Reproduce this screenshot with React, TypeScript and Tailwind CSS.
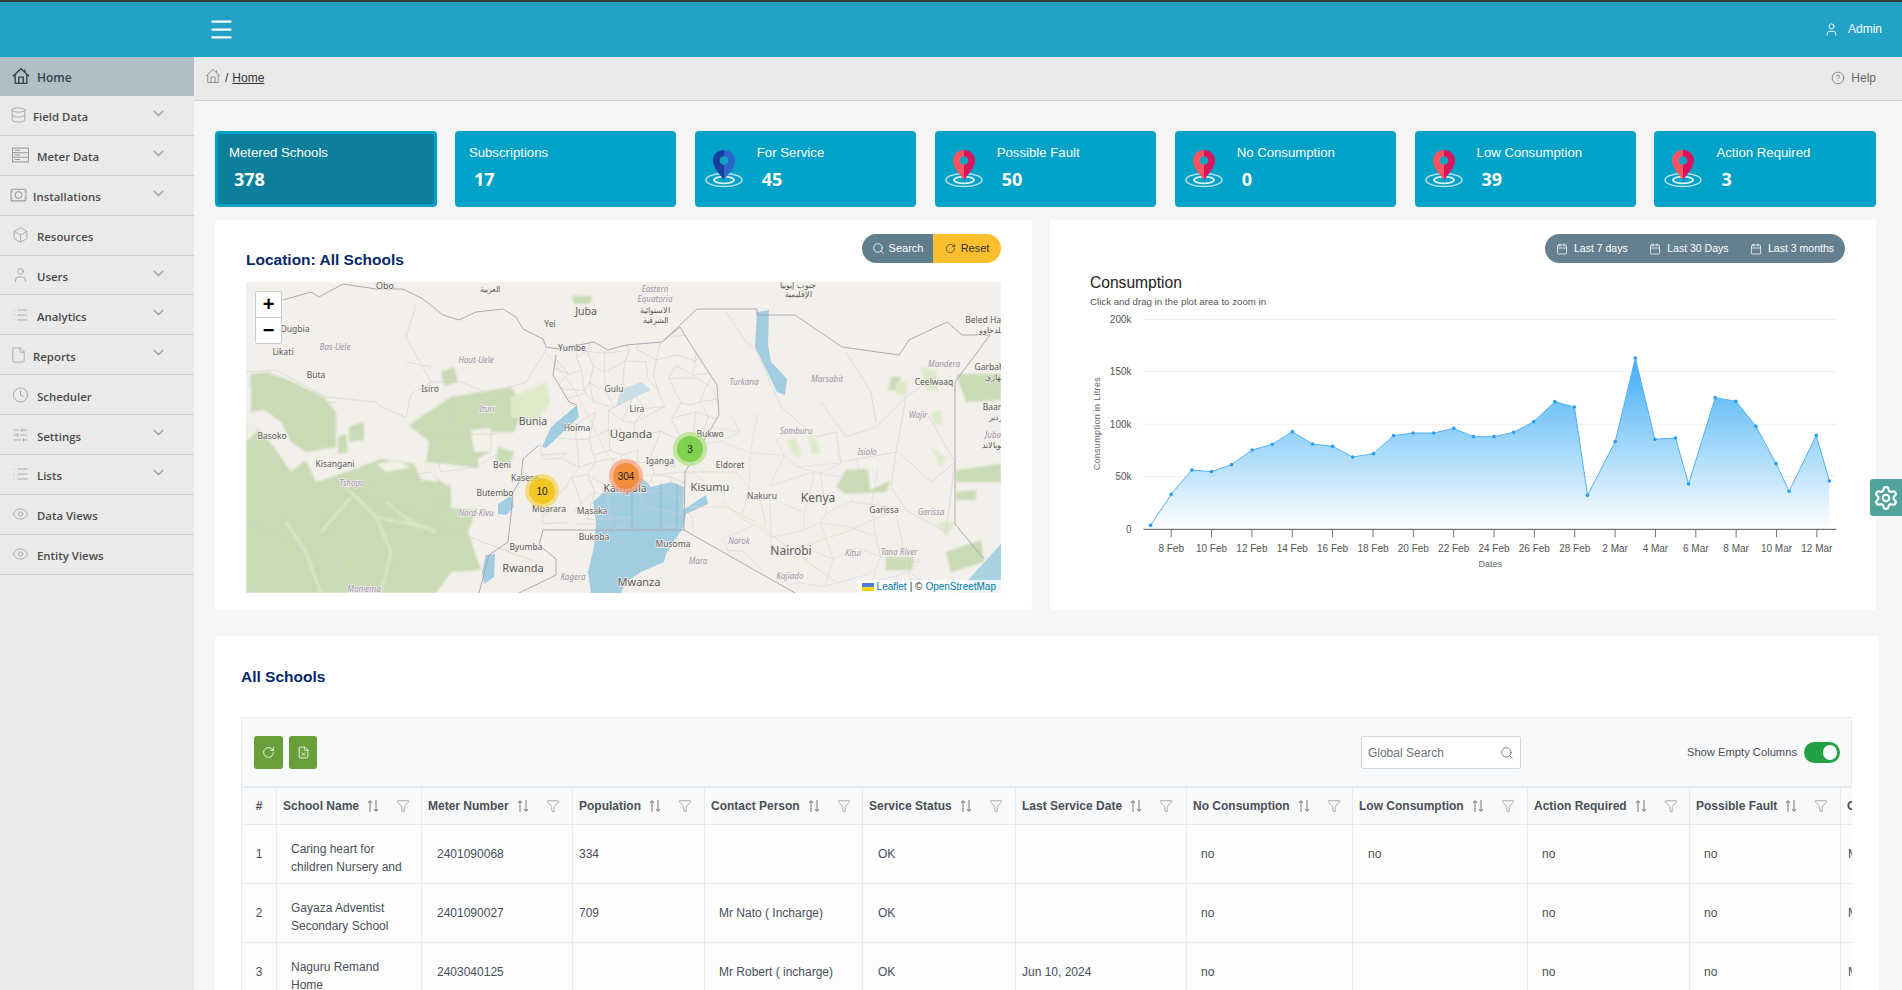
import React from 'react';
import {
  Box,
  Calendar,
  ChevronDown,
  CircleHelp,
  Clock,
  Database,
  Eye,
  File,
  FileX,
  Funnel,
  List,
  Menu,
  RotateCw,
  Search,
  Settings,
  SlidersHorizontal,
  User,
} from 'lucide-react';

const arial = { fontFamily: '"Liberation Sans", Arial, sans-serif' };

type IconProps = { size?: number; color?: string; strokeWidth?: number; className?: string };

const HomeIcon = ({ size = 16, color = '#9e9e9e', strokeWidth = 1, className }: IconProps) => (
  <svg width={size} height={size} viewBox="0 0 16 16" fill="none" stroke={color} strokeWidth={strokeWidth} className={className}>
    <path d="M0.800 8.200 8 1.500l7.200 6.700M2.800 6.500v8h10.400v-8M6 14.500V9h4v5.500M11.500 2.200v2.800" />
  </svg>
);

const CameraBox = ({ size = 16, color = '#9e9e9e' }: IconProps) => (
  <svg width={size} height={size} viewBox="0 0 16 16" fill="none" stroke={color} strokeWidth="1">
    <rect x="1" y="2.5" width="14" height="11" rx="1" />
    <circle cx="8" cy="8" r="3" />
    <path d="M1 5h1.500M13.500 5H15M1 11h1.500M13.500 11H15" />
  </svg>
);

const RowsBox = ({ size = 16, color = '#9e9e9e' }: IconProps) => (
  <svg width={size} height={size} viewBox="0 0 16 16" fill="none" stroke={color} strokeWidth="1">
    <rect x="0.5" y="1.500" width="15" height="13" />
    <path d="M0.500 5.800h15M0.500 10.200h15M2.500 3.600h5M2.500 8h5M2.500 12.300h5" />
  </svg>
);

const menu = [
  { label: 'Home', icon: HomeIcon, left: 37, active: true },
  { label: 'Field Data', icon: Database, left: 33, sub: true },
  { label: 'Meter Data', icon: RowsBox, left: 37, sub: true },
  { label: 'Installations', icon: CameraBox, left: 33, sub: true },
  { label: 'Resources', icon: Box, left: 37 },
  { label: 'Users', icon: User, left: 37, sub: true },
  { label: 'Analytics', icon: List, left: 37, sub: true },
  { label: 'Reports', icon: File, left: 33, sub: true },
  { label: 'Scheduler', icon: Clock, left: 37 },
  { label: 'Settings', icon: SlidersHorizontal, left: 37, sub: true },
  { label: 'Lists', icon: List, left: 37, sub: true },
  { label: 'Data Views', icon: Eye, left: 37 },
  { label: 'Entity Views', icon: Eye, left: 37 },
];

const Sidebar = () => (
  <aside className="w-[194px] shrink-0 bg-[#eaeaea]" style={{ fontFamily: '"Open Sans", sans-serif' }}>
    {menu.map((m) => {
      const Icon = m.icon as React.ElementType;
      return (
        <div
          key={m.label}
          className={`relative flex items-center border-b font-semibold ${
            m.active
              ? 'h-[39px] text-[12px] bg-[#b0bec5] text-[#2f4450] border-[#b0bec5]'
              : 'h-[39.9px] text-[11.4px] text-[#4a4a4a] border-[#d0d0d0]'
          }`}
        >
          <span className={`absolute top-1/2 -translate-y-1/2 ${m.left === 33 ? 'left-[10px]' : 'left-[12px]'}`}>
            <Icon size={m.active ? 18 : 17} strokeWidth={m.active ? 1.2 : 1.1} color={m.active ? '#2f4450' : '#9a9a9a'} />
          </span>
          <span className={m.left === 33 ? 'ml-[33px] mt-[3px]' : 'ml-[37px] mt-[3px]'}>{m.label}</span>
          {m.sub && <ChevronDown size={17} strokeWidth={2} color="#a8a8a8" className="absolute left-[150px] top-[9px]" />}
        </div>
      );
    })}
  </aside>
);

const Pin = ({ blue }: { blue?: boolean }) => (
  <svg width="40" height="40" viewBox="0 0 40 40" className="shrink-0">
    <ellipse cx="19" cy="30" rx="18" ry="6.500" fill="none" stroke="#bfe6f2" strokeWidth="1.300" />
    <ellipse cx="19" cy="30" rx="10" ry="3.300" fill="none" stroke="#d8f1f8" strokeWidth="1.800" />
    <path d="M19 0C12.500 0 8 4.800 8 10.500 8 18 15 24 19 30Z" fill={blue ? '#173f9f' : '#ff5560'} />
    <path d="M19 0C25.500 0 30 4.800 30 10.500 30 18 23 24 19 30Z" fill={blue ? '#2e64cc' : '#d9145f'} />
    <circle cx="19" cy="10.500" r="4.300" fill="#16a3c4" />
  </svg>
);

const stats = [
  { title: 'Metered Schools', value: '378', active: true },
  { title: 'Subscriptions', value: '17' },
  { title: 'For Service', value: '45', pin: 'blue' },
  { title: 'Possible Fault', value: '50', pin: 'red' },
  { title: 'No Consumption', value: '0', pin: 'red' },
  { title: 'Low Consumption', value: '39', pin: 'red' },
  { title: 'Action Required', value: '3', pin: 'red' },
];

const StatCards = () => (
  <div className="grid grid-cols-7 gap-x-[18.4px] w-[1661px]">
    {stats.map((s) => (
      <div
        key={s.title}
        className={`h-[76px] rounded-[4px] flex text-white ${
          s.active ? 'bg-[#0b7f9b] border-[3px] border-[#00a2c8] pl-[11px] pt-[10.5px]' : 'bg-[#00a2c8] pt-[13.5px] pl-[14px]'
        }`}
      >
        {s.pin && (
          <div className="w-[48px] mt-[5.500px] -ml-[4px] mr-[4px]">
            <Pin blue={s.pin === 'blue'} />
          </div>
        )}
        <div>
          <div className="text-[13.2px] leading-[15px]" style={arial}>
            {s.title}
          </div>
          <div
            className="ml-[5px] mt-[7.5px] text-[18px] leading-[24px] font-bold"
            style={{ fontFamily: '"Open Sans", sans-serif' }}
          >
            {s.value}
          </div>
        </div>
      </div>
    ))}
  </div>
);

// district boundaries are too many to trace by hand, so they are a jittered mesh
const mesh = (x0: number, y0: number, x1: number, y1: number, step: number, seed: number) => {
  const r = (n: number) => {
    const v = Math.sin(n * 12.9898 + seed) * 43758.5453;
    return v - Math.floor(v);
  };
  const nx = Math.floor((x1 - x0) / step);
  const ny = Math.floor((y1 - y0) / step);
  const p = (i: number, j: number) => {
    const k = i * 31 + j * 57;
    return `${(x0 + i * step + (r(k) - 0.5) * step).toFixed(1)},${(y0 + j * step + (r(k + 3) - 0.5) * step).toFixed(1)}`;
  };
  let d = '';
  for (let i = 0; i <= nx; i++) {
    for (let j = 0; j <= ny; j++) {
      if (i < nx && r(i * 7 + j * 13) > 0.3) d += `M${p(i, j)}L${p(i + 1, j)}`;
      if (j < ny && r(i * 11 + j * 17) > 0.3) d += `M${p(i, j)}L${p(i, j + 1)}`;
    }
  }
  return d;
};

const uganda = '310,73 348,60 362,68 380,63 416,60 434,45 443,60 471,103 473,133 459,157 439,190 438,248 297,248 265,233 267,210 275,197 277,177 293,163 323,120 307,93';
const kenyaSouth = '439,190 459,157 473,133 520,130 590,170 640,190 660,250 690,311 555,311 438,248';

type Label = [string, number, number, number?, boolean?];
const labels: Label[] = [
  ['Obo', 139, 7, 9], ['Juba', 340, 33, 10.5], ['Yei', 304, 45, 8.5], ['Dugbia', 49, 50, 8.5], ['Likati', 37, 73, 8.5],
  ['Bas-Uele', 89, 68, 8, true], ['Haut-Uele', 230, 81, 8, true], ['Yumbe', 326, 69, 8.5], ['Buta', 70, 96, 8.5],
  ['Isiro', 184, 110, 8.5], ['Gulu', 368, 110, 8.5], ['Ituri', 241, 130, 8, true], ['Bunia', 287, 143, 10.5],
  ['Hoima', 331, 149, 8.5], ['Basoko', 26, 157, 8.5], ['Kisangani', 89, 185, 8.5], ['Beni', 256, 186, 8.5],
  ['Kasese', 279, 199, 8.5], ['Tshopo', 106, 204, 8, true], ['Butembo', 249, 214, 8.5], ['Nord-Kivu', 230, 234, 8, true],
  ['Mbarara', 303, 230, 8.5], ['Masaka', 346, 232, 8.5], ['Bukoba', 348, 258, 8.5], ['Byumba', 280, 268, 8.5],
  ['Rwanda', 277, 290, 11], ['Kagera', 327, 298, 8, true], ['Maniema', 118, 310, 8, true],
  ['Eastern', 409, 10, 8, true], ['Equatoria', 409, 20, 8, true], ['الاستوائية', 409, 31, 8], ['الشرقية', 409, 41, 8],
  ['جنوب إيوبيا', 552, 6, 8], ['الإقليمية', 552, 15, 8], ['العربية', 244, 10, 8],
  ['Lira', 391, 130, 8.5], ['Uganda', 385, 156, 11.5], ['Bukwo', 464, 155, 8.5], ['Iganga', 414, 182, 8.5],
  ['Eldoret', 484, 186, 8.5], ['Kisumu', 464, 209, 11], ['Kampala', 379, 210, 10.5], ['Nakuru', 516, 217, 8.5],
  ['Kenya', 572, 220, 12], ['Turkana', 498, 103, 8, true], ['Marsabit', 581, 100, 8, true], ['Somburu', 550, 152, 8, true],
  ['Isiolo', 621, 173, 8, true], ['Mandera', 698, 85, 8, true], ['Ceelwaaq', 688, 103, 8.5], ['Garbaharey', 752, 88, 8.5],
  ['Beled Hawo', 743, 41, 8.5], ['بلدحاوو', 745, 51, 8], ['غربهاري', 752, 98, 8], ['Baardheere', 760, 128, 8.5], ['باردير', 752, 138, 8],
  ['Wajir', 672, 136, 8, true], ['Jubaland', 755, 156, 8, true], ['جوبالاند', 748, 166, 8],
  ['Garissa', 638, 231, 8.5], ['Garissa', 685, 233, 8, true], ['Narok', 493, 262, 8, true], ['Mara', 452, 282, 8, true],
  ['Musoma', 427, 265, 8.5], ['Nairobi', 545, 273, 12], ['Kitui', 607, 274, 8, true], ['Tana River', 653, 273, 8, true],
  ['Kajiado', 544, 297, 8, true], ['Mwanza', 393, 304, 11],
];

const MapArt = () => (
  <svg viewBox="0 0 755 311" className="block w-full h-full" style={{ fontFamily: '"Noto Sans", sans-serif' }}>
    <defs>
      <clipPath id="ug">
        <polygon points={uganda} />
      </clipPath>
      <clipPath id="ke">
        <polygon points={kenyaSouth} />
      </clipPath>
    </defs>
    <rect width="755" height="311" fill="#f3efea" />
    <g fill="#c8dbb5" className="blur-[1px]">
      <polygon points="5,100 25,92 40,97 78,115 90,130 90,165 60,170 45,160 35,140 18,128 5,130" />
      <polygon points="0,140 15,150 30,168 45,190 60,178 70,200 100,190 135,177 170,182 205,206 205,226 230,228 222,250 235,288 205,290 190,311 0,311" />
      <polygon points="163,143 205,115 265,105 278,125 268,150 245,150 245,170 232,176 232,186 200,182 180,180 183,160" />
      <polygon points="103,145 118,140 118,158 103,160" />
      <polygon points="92,155 100,152 102,170 92,172" />
      <polygon points="5,92 25,90 12,108 4,104" />
      <polygon points="252,165 268,170 262,186 250,178" />
      <polygon points="195,90 208,85 212,100 198,104" />
      <polygon points="326,14 346,14 344,22 328,22" />
      <polygon points="600,188 622,187 624,208 645,198 640,210 600,212 590,205" />
      <polygon points="710,92 755,92 755,118 720,120" />
      <polygon points="710,188 755,182 755,200 710,200" />
      <polygon points="710,210 730,208 730,218 710,218" />
      <polygon points="640,275 668,275 666,288 640,288" />
      <polygon points="645,95 655,95 652,108 642,108" />
      <polygon points="700,270 735,258 738,280 705,290" />
    </g>
    <g fill="#dfeacb" className="blur-[1px]">
      <polygon points="265,115 300,100 305,120 290,140 265,135" />
      <polygon points="540,158 550,156 556,175 548,174" />
      <polygon points="562,155 570,155 574,172 566,172" />
      <polygon points="685,130 695,128 697,142 687,142" />
      <polygon points="685,165 700,175 695,185" />
      <polygon points="650,100 662,100 660,115 650,112" />
      <polygon points="675,85 690,88 692,110 680,108" />
      <polygon points="690,240 710,240 700,255" />
    </g>
    <g fill="#f3efe6" className="blur-[1px]">
      <polygon points="225,148 245,146 245,170 228,170" />
      <polygon points="168,182 180,180 193,200 175,198" />
      <polygon points="130,182 150,178 165,185 140,190" />
      <polygon points="0,135 12,148 0,160" />
    </g>
    <g stroke="#dbe7c9" strokeWidth="2.600" fill="none" className="blur-[1px]">
      <path d="M100,205 L130,235 L145,270 L135,311 M130,235 L175,245 M140,220 L165,240 L190,250 M40,240 L60,270 L75,311 M105,215 L75,250" />
    </g>
    <g stroke="#d9c8b4" strokeWidth="0.800" fill="none" opacity="0.7">
      <path d="M180,153 L250,152 M100,205 L170,235 L290,280" />
    </g>
    <g fill="#a1cde1">
      <path d="M347,220 L358,210 L380,204 L395,195 L405,205 L425,200 L438,205 L437,228 L460,213 L462,222 L440,232 L437,246 L426,262 L420,272 L418,280 L395,290 L380,300 L375,311 L345,311 L342,290 L348,265 L350,240 Z" />
      <polygon points="331,123 333,135 300,166 296,165 305,145" />
      <polygon points="252,222 266,213 268,225 260,233 252,232" />
      <polygon points="240,273 249,272 248,295 238,302 236,290" />
      <polygon points="511,30 523,28 522,62 525,80 541,97 539,113 531,110 519,85 509,65" />
      <polygon points="723,297 755,262 755,311 712,311" fill="#aad3df" />
      <polygon points="375,108 395,100 405,108 390,115 370,125" opacity="0.5" />
    </g>
    <path d={mesh(300, 55, 480, 250, 16, 3)} clipPath="url(#ug)" stroke="#d3ced6" strokeWidth="0.600" fill="none" />
    <path d={mesh(430, 120, 690, 311, 26, 9)} clipPath="url(#ke)" stroke="#dcd7dc" strokeWidth="0.600" fill="none" />
    <g stroke="#d3ced5" strokeWidth="0.600" fill="none">
      <path d="M0,90 L30,88 L80,115 L130,120 L135,125 L160,135 L165,112 L185,100 L215,100 L245,112 L280,100 L300,68" />
      <path d="M170,23 L160,55 L185,100 M160,80 L185,85 M125,210 L155,225 L190,240 L195,218 L205,200" />
      <path d="M180,145 L205,140 L205,115 M185,155 L195,190 L230,185 L255,170 M120,200 L185,190" />
      <path d="M100,310 L90,280 L50,260 L0,240 M30,130 L90,120" />
      <path d="M511,70 L535,125 L570,155 L590,150 L595,180 L650,170 L660,115 L630,145 L600,155 L575,120 M660,115 L690,95 M650,170 L645,205 L660,228 L700,250 L709,180 L685,200 L650,168" />
      <path d="M480,30 L500,60 L511,70 M600,70 L625,110 L630,140 M680,130 L709,180" />
    </g>
    <g stroke="#ead5c4" strokeWidth="0.700" fill="none">
      <path d="M440,225 L480,225 L510,240 L545,268 L590,300 M490,190 L515,220 L520,245 M545,268 L600,250 L640,232 M650,232 L665,300" />
      <path d="M300,70 L330,110 L360,170 L380,195 L440,190 L490,190" />
    </g>
    <g stroke="#8db3ca" strokeWidth="0.700" fill="none">
      <path d="M386,204 V248 M415,201 V248 M431,201 V248" />
    </g>
    <g stroke="#b0a8b4" strokeWidth="1" fill="none" strokeLinejoin="round">
      <polyline points="37,18 65,10 73,15 97,2 130,7 157,7 177,17 197,33 213,38 230,30 257,27 270,35 277,47 297,57 300,65 313,67 348,60 362,68 380,63 416,60 451,27 511,27 511,33 549,33 596,65 653,73 663,58 701,40 716,53 744,53 709,100 709,242 738,277" />
      <polyline points="310,73 307,93 323,120 331,123" />
      <polyline points="293,163 277,177 275,197 267,210 265,233 262,260 243,273 233,311" />
      <polyline points="416,60 434,45 443,60 471,103 473,133 459,157 439,190 438,248 549,311" />
      <polyline points="297,248 438,248" />
      <polyline points="297,248 293,263 310,277 310,293 273,311" />
    </g>
    <g className="[paint-order:stroke]" stroke="#f3efea" strokeWidth="1.400" textAnchor="middle">
      {labels.map(([t, x, y, s, it], i) => (
        <text
          key={i}
          x={x}
          y={y}
          fontSize={s}
          fontStyle={it ? 'italic' : 'normal'}
          fill={it ? '#a095a8' : '#5c5c5c'}
        >
          {t}
        </text>
      ))}
    </g>
    {[
      { x: 296, y: 209, o: 'rgba(241,211,87,0.7)', i: 'rgba(240,194,12,0.8)', t: '10' },
      { x: 380, y: 194, o: 'rgba(253,156,115,0.7)', i: 'rgba(241,128,23,0.7)', t: '304' },
      { x: 444, y: 167, o: 'rgba(181,226,140,0.8)', i: 'rgba(110,204,57,0.8)', t: '3' },
    ].map((c) => (
      <g key={c.t}>
        <circle cx={c.x} cy={c.y} r="17" fill={c.o} />
        <circle cx={c.x} cy={c.y} r="13" fill={c.i} />
        <text x={c.x} y={c.y + 3.500} fontSize="10" fontFamily='"Liberation Sans", sans-serif' textAnchor="middle" fill="#222">
          {c.t}
        </text>
      </g>
    ))}
  </svg>
);

const LocationCard = () => (
  <div className="bg-white rounded-[4px] h-[390px] px-[31px] pt-[14px]">
    <div className="flex justify-between items-end">
      <h2 className="text-[15.5px] leading-[20px] font-bold text-[#06296b] -mb-[7px]" style={arial}>
        Location: All Schools
      </h2>
      <div className="flex h-[29px] rounded-full overflow-hidden text-[11px]" style={arial}>
        <div className="w-[71px] bg-[#607d8b] text-white flex items-center justify-center gap-[4px]">
          <Search size={13} strokeWidth={1.5} /> Search
        </div>
        <div className="w-[68px] bg-[#fbbf2d] text-[#333] flex items-center justify-center gap-[5px]">
          <RotateCw size={11} strokeWidth={1.5} /> Reset
        </div>
      </div>
    </div>
    <div className="relative mt-[19px] h-[311px] overflow-hidden">
      <MapArt />
      <div className="absolute left-[9px] top-[9px] w-[27px] h-[53px] bg-white rounded-[2px] border border-[#ccc] flex flex-col items-center text-black font-bold" style={arial}>
        <div className="h-[26px] w-full flex items-center justify-center border-b border-[#ccc] text-[20px] leading-none">+</div>
        <div className="h-[26px] w-full flex items-center justify-center text-[20px] leading-none">−</div>
      </div>
      <div className="absolute right-0 bottom-0 h-[13px] pl-[5px] pr-[5px] bg-white/80 flex items-center text-[10px] leading-none text-[#333]" style={arial}>
        <svg width="12" height="8" viewBox="0 0 12 8" className="mr-[3px]">
          <rect width="12" height="4" fill="#4c7be1" />
          <rect y="4" width="12" height="4" fill="#ffd500" />
        </svg>
        <span className="text-[#0078a8]">Leaflet</span>
        <span className="mx-[3px]">| ©</span>
        <span className="text-[#0078a8]">OpenStreetMap</span>
      </div>
    </div>
  </div>
);

// points are read from the plot: x / 1.84, y / 3 - 10 gives svg pixels
const raw = [
  [185, 673], [223, 580], [261, 507], [297, 512], [334, 491], [372, 447], [409, 430], [446, 392], [483, 429], [520, 436],
  [557, 468], [595, 458], [632, 404], [668, 396], [706, 396], [743, 382], [779, 407], [817, 407], [853, 394], [890, 362],
  [929, 302], [965, 318], [989, 583], [1040, 422], [1077, 171], [1113, 415], [1151, 411], [1175, 549], [1224, 290],
  [1262, 301], [1299, 376], [1336, 488], [1360, 571], [1410, 403], [1434, 540],
];
const X = (p: number) => p / 1.84;
const Y = (p: number) => p / 3 - 10;
const ticks = ['8 Feb', '10 Feb', '12 Feb', '14 Feb', '16 Feb', '18 Feb', '20 Feb', '22 Feb', '24 Feb', '26 Feb', '28 Feb', '2 Mar', '4 Mar', '6 Mar', '8 Mar', '10 Mar', '12 Mar'];

const ChartArt = () => {
  const pts = raw.map(([x, y]) => `${X(x).toFixed(1)},${Y(y).toFixed(1)}`).join(' ');
  const base = Y(685);
  return (
    <svg width="826" height="270" className="block" style={arial}>
      <defs>
        <linearGradient id="area" x1="0" y1={Y(171)} x2="0" y2={base} gradientUnits="userSpaceOnUse">
          <stop offset="0" stopColor="#3fadf6" />
          <stop offset="1" stopColor="#ffffff" />
        </linearGradient>
      </defs>
      {[[55, '200k'], [211, '150k'], [370, '100k'], [527, '50k'], [685, '0']].map(([y, t]) => (
        <g key={t as string}>
          {y !== 685 && <line x1={X(172)} x2={X(1447)} y1={Y(y as number)} y2={Y(y as number)} stroke="#eeeeee" strokeWidth="1" />}
          <text x={X(150)} y={Y(y as number) + 3.500} fontSize="10" fill="#555" textAnchor="end">
            {t}
          </text>
        </g>
      ))}
      <polygon points={`${X(185)},${base} ${pts} ${X(1434)},${base}`} fill="url(#area)" />
      <polyline points={pts} fill="none" stroke="#52b3f2" strokeWidth="1" />
      {raw.map(([x, y]) => (
        <circle key={x} cx={X(x)} cy={Y(y)} r="1.800" fill="#2a9df4" />
      ))}
      <line x1={X(172)} x2={X(1447)} y1={base} y2={base} stroke="#555" strokeWidth="1" />
      {ticks.map((t, i) => {
        const x = X(223 + i * 74.25);
        return (
          <g key={t}>
            <line x1={x} x2={x} y1={base} y2={base + 8} stroke="#777" strokeWidth="1" />
            <text x={x} y={Y(743) + 3.500} fontSize="10" fill="#555" textAnchor="middle">
              {t}
            </text>
          </g>
        );
      })}
      <text x={X(810)} y={Y(788) + 3.500} fontSize="9" fill="#666" textAnchor="middle">
        Dates
      </text>
      <text
        transform={`translate(${X(92)},${Y(368)}) rotate(-90)`}
        fontSize="9"
        letterSpacing="0.3"
        fill="#666"
        textAnchor="middle"
      >
        Consumption in Litres
      </text>
    </svg>
  );
};

const ChartCard = () => (
  <div className="bg-white rounded-[4px] h-[390px] pt-[14px]" style={arial}>
    <div className="flex justify-end pr-[31px]">
      <div className="h-[29px] w-[300px] rounded-full bg-[#64808f] text-white text-[10.500px] flex items-center justify-between px-[11px]">
        {['Last 7 days', 'Last 30 Days', 'Last 3 months'].map((t) => (
          <span key={t} className="flex items-center gap-[6px]">
            <Calendar size={12} strokeWidth={1.5} />
            {t}
          </span>
        ))}
      </div>
    </div>
    <div className="pl-[40px] mt-[11px] text-[15.6px] leading-[18px] text-[#222]">Consumption</div>
    <div className="pl-[40px] mt-[4px] text-[9.7px] leading-[12px] text-[#555]">Click and drag in the plot area to zoom in</div>
    <div className="mt-[2.5px]">
      <ChartArt />
    </div>
  </div>
);

const SortIcon = () => (
  <svg width="14" height="14" viewBox="0 0 14 14" fill="none" stroke="#777" strokeWidth="1" className="shrink-0">
    <path d="M4 13V2M2 4l2-2.500L6 4M10 1v11M8 10l2 2.500 2-2.500" />
  </svg>
);

const columns = [
  { name: 'School Name', width: 145, pad: 'pl-[14px]' },
  { name: 'Meter Number', width: 151, pad: 'pl-[15px]' },
  { name: 'Population', width: 132, pad: 'pl-[6px]' },
  { name: 'Contact Person', width: 158, pad: 'pl-[14px]' },
  { name: 'Service Status', width: 153, pad: 'pl-[15px]' },
  { name: 'Last Service Date', width: 171, pad: 'pl-[6px]' },
  { name: 'No Consumption', width: 166, pad: 'pl-[14px]' },
  { name: 'Low Consumption', width: 175, pad: 'pl-[15px]' },
  { name: 'Action Required', width: 162, pad: 'pl-[14px]' },
  { name: 'Possible Fault', width: 151, pad: 'pl-[14px]' },
  { name: 'Contact', width: 200, pad: 'pl-[7px]' },
];

const rows = [
  ['1', ['Caring heart for', 'children Nursery and'], '2401090068', '334', '', 'OK', '', 'no', 'no', 'no', 'no', 'Mr'],
  ['2', ['Gayaza Adventist', 'Secondary School'], '2401090027', '709', 'Mr Nato ( Incharge)', 'OK', '', 'no', '', 'no', 'no', 'Mr'],
  ['3', ['Naguru Remand', 'Home'], '2403040125', '', 'Mr Robert ( incharge)', 'OK', 'Jun 10, 2024', 'no', '', 'no', 'no', 'Mr'],
];

const SchoolsTable = () => (
  <div className="bg-white rounded-[4px] mt-[26px] pt-[31px] pl-[26px] pr-[27px] h-[400px]" style={arial}>
    <h2 className="text-[15.5px] leading-[20px] font-bold text-[#06296b]">All Schools</h2>
    <div className="mt-[30px] h-[70px] bg-[#f8f9fa] border border-[#e9ecef] flex items-center pl-[12px] pr-[11px]">
      <div className="flex gap-[6px] mt-[1px]">
        <div className="w-[29px] h-[33px] rounded-[3px] bg-[#689f38] flex items-center justify-center text-white">
          <RotateCw size={13} strokeWidth={1.6} />
        </div>
        <div className="w-[28px] h-[33px] rounded-[3px] bg-[#689f38] flex items-center justify-center text-white">
          <FileX size={13} strokeWidth={1.6} />
        </div>
      </div>
      <div className="ml-auto w-[160px] h-[33px] bg-white border border-[#ced4da] rounded-[2px] flex items-center justify-between px-[6px] text-[12px] text-[#6c757d] mt-[1px]">
        Global Search
        <Search size={14} strokeWidth={1.2} color="#495057" />
      </div>
      <span className="ml-[166px] text-[11.2px] text-[#495057] mt-[1px]">Show Empty Columns</span>
      <div className="ml-[7px] w-[36px] h-[21px] rounded-full bg-[#22a044] relative mt-[1px]">
        <span className="absolute right-[3px] top-[3px] w-[14px] h-[15px] rounded-full bg-white" />
      </div>
    </div>
    <div className="overflow-hidden w-[1611px]">
      <table className="table-fixed w-[1800px] border-collapse text-[12px] text-[#495057]">
        <colgroup>
          <col className="w-[35px]" />
          {columns.map((c) => (
            <col key={c.name} style={{ width: c.width }} />
          ))}
        </colgroup>
        <thead>
          <tr className="h-[37px] bg-[#f8f9fa]">
            <th className="border border-[#e9ecef] font-bold text-center">#</th>
            {columns.map((c) => (
              <th key={c.name} className="border border-[#e9ecef] pl-[6px] font-bold text-left whitespace-nowrap overflow-hidden">
                <span className="flex items-center">
                  {c.name}
                  <span className="ml-[7px] mr-[16px] flex"><SortIcon /></span>
                  <Funnel size={14} strokeWidth={0.9} color="#666" className="shrink-0" />
                </span>
              </th>
            ))}
          </tr>
        </thead>
        <tbody>
          {rows.map((r) => (
            <tr key={r[0] as string} className="h-[59px] bg-[#fdfdfe]">
              <td className="border border-[#e9ecef] text-center">{r[0]}</td>
              {r.slice(1).map((cell, i) => (
                <td key={i} className={`border border-[#e9ecef] leading-[18px] whitespace-nowrap overflow-hidden ${columns[i].pad} ${Array.isArray(cell) ? 'pt-[7px]' : ''}`}>
                  {Array.isArray(cell) ? (
                    <>
                      <div>{cell[0]}</div>
                      <div>{cell[1]}</div>
                    </>
                  ) : (
                    cell
                  )}
                </td>
              ))}
            </tr>
          ))}
        </tbody>
      </table>
    </div>
  </div>
);

export default function App() {
  return (
    <div className="relative h-[990px] w-[1902px] overflow-hidden flex flex-col bg-[#f5f5f5]" style={arial}>
      <header className="h-[57px] shrink-0 border-t-2 border-[#37393b] bg-[#22a2c6] flex items-center text-white">
        <Menu size={27} strokeWidth={2} className="ml-[208px] -mt-[1px]" />
        <div className="ml-auto mr-[20px] flex items-center gap-[9px] text-[12px] -mt-[1px]">
          <User size={15} strokeWidth={1.5} />
          Admin
        </div>
      </header>
      <div className="flex flex-1 min-h-0">
        <Sidebar />
        <main className="flex-1 min-w-0">
          <div className="h-[44px] bg-[#e9e9e9] border-b border-[#cfcfcf] flex items-center pl-[11px] pr-[26px] pb-[2px] text-[12px] text-[#333]">
            <HomeIcon size={16} strokeWidth={0.9} color="#888" className="-mt-[3px]" />
            <span className="ml-[4px]">/</span>
            <span className="ml-[4px] underline">Home</span>
            <span className="ml-auto flex items-center gap-[6px] text-[#666]">
              <CircleHelp size={14} strokeWidth={1.2} />
              Help
            </span>
          </div>
          <div className="pt-[30px] pl-[21px] pr-[23px]">
            <StatCards />
            <div className="grid grid-cols-[817px_826px] gap-x-[18px] mt-[13px]">
              <LocationCard />
              <ChartCard />
            </div>
            <SchoolsTable />
          </div>
        </main>
      </div>
      <div className="absolute right-0 top-[479px] w-[32px] h-[37px] bg-[#4fa39b] rounded-l-[3px] flex items-center justify-center text-white">
        <Settings size={26} strokeWidth={2} />
      </div>
    </div>
  );
}
